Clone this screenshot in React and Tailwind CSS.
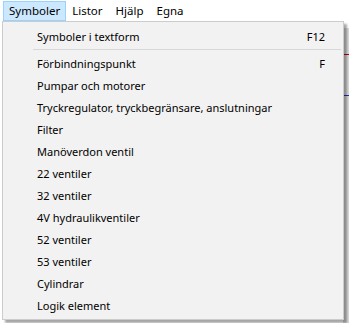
import React from 'react';

const items = [
  'Förbindningspunkt',
  'Pumpar och motorer',
  'Tryckregulator, tryckbegränsare, anslutningar',
  'Filter',
  'Manöverdon ventil',
  '22 ventiler',
  '32 ventiler',
  '4V hydraulikventiler',
  '52 ventiler',
  '53 ventiler',
  'Cylindrar',
  'Logik element',
];

const MenuItem = ({ label, shortcut }) => (
  <div className="flex h-[22px] items-center pl-[34px] pr-[18px]">
    <span className="flex-1">{label}</span>
    {shortcut && <span>{shortcut}</span>}
  </div>
);

const App = () => {
  return (
    <div
      className="relative h-[323px] w-[349px] overflow-hidden bg-white text-[11px] text-black"
      style={{ fontFamily: '"Noto Sans", "Open Sans", sans-serif' }}
    >
      {/* menu bar */}
      <div className="flex h-[21px] items-stretch pl-[3px] pt-[1px] text-[11.5px]">
        <div className="flex items-center border border-[#99d1ff] bg-[#cce8ff] px-[5px]">Symboler</div>
        <div className="flex items-center px-[6px]">Listor</div>
        <div className="flex items-center px-[7px]">Hjälp</div>
        <div className="flex items-center px-[6px]">Egna</div>
      </div>

      {/* background window edge behind the dropdown */}
      <div className="absolute right-0 top-[28px] h-[295px] w-[6px] bg-[#d9d9d9]">
        <div className="mt-[26px] h-px bg-[#c00000]" />
        <div className="mt-[40px] h-px bg-[#2030c0]" />
      </div>

      {/* dropdown */}
      <div className="absolute left-[2px] top-[21px] w-[342px] border border-[#cccccc] bg-[#f2f2f2] pb-[2px] pt-[4px] shadow-[3px_3px_2px_rgba(0,0,0,0.35)]">
        <MenuItem label="Symboler i textform" shortcut="F12" />
        <div className="ml-[30px] mr-[2px] mt-[1px] mb-[3px] h-px bg-[#d7d7d7]" />
        <MenuItem label={items[0]} shortcut="F" />
        {items.slice(1).map((it) => (
          <MenuItem key={it} label={it} />
        ))}
      </div>
    </div>
  );
};

export default App;
